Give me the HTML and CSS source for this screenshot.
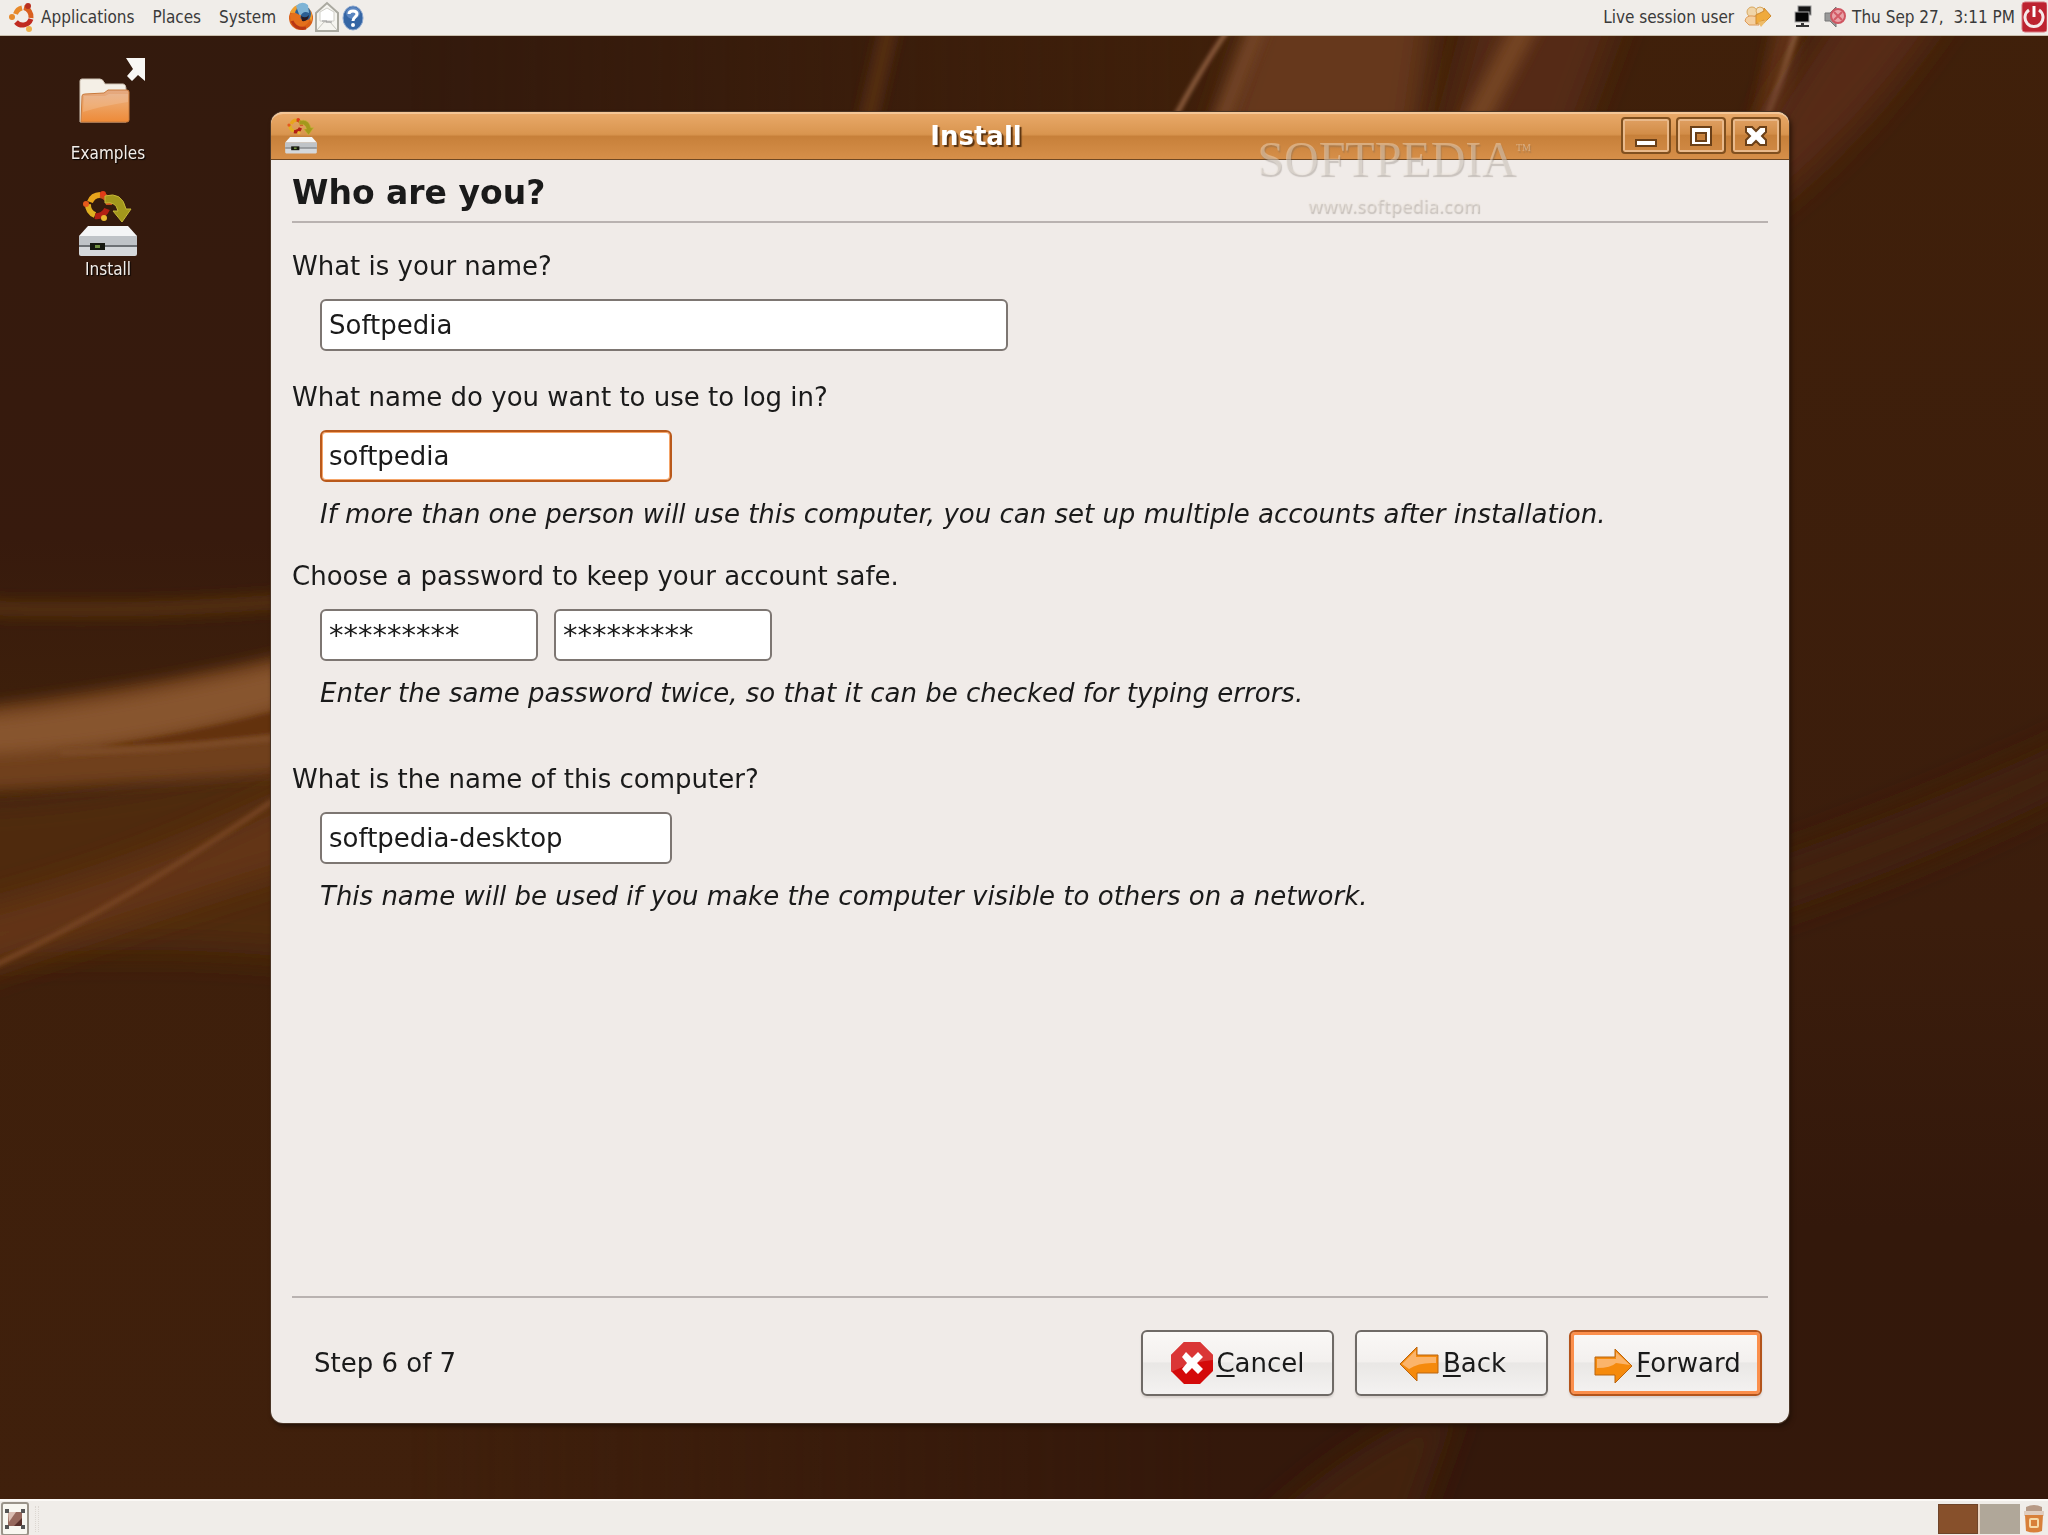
FILE: index.html
```html
<!DOCTYPE html>
<html lang="en">
<head>
  <meta charset="UTF-8">
  <meta name="viewport" content="width=device-width, initial-scale=1.0">
  <title>Install</title>
  <link rel="stylesheet" href="styles.css">
</head>
<body>
  <svg class="wallpaper" viewBox="0 0 2048 1535" preserveAspectRatio="none" aria-hidden="true">
    <defs>
      <filter id="soft" filterUnits="userSpaceOnUse" x="-100" y="-100" width="2248" height="1735"><feGaussianBlur stdDeviation="16"/></filter>
      <filter id="mid" filterUnits="userSpaceOnUse" x="-100" y="-100" width="2248" height="1735"><feGaussianBlur stdDeviation="7"/></filter>
      <filter id="fine" filterUnits="userSpaceOnUse" x="-100" y="-100" width="2248" height="1735"><feGaussianBlur stdDeviation="2"/></filter>
      <linearGradient id="base" x1="0" y1="0" x2="0" y2="1">
        <stop offset="0" stop-color="#331a0d"/>
        <stop offset="0.35" stop-color="#371a0d"/>
        <stop offset="0.45" stop-color="#3d1f0b"/>
        <stop offset="1" stop-color="#40200c"/>
      </linearGradient>
      <linearGradient id="right" x1="0" y1="0" x2="0" y2="1">
        <stop offset="0" stop-color="#40200a"/>
        <stop offset="0.6" stop-color="#3b1d0c"/>
        <stop offset="0.8" stop-color="#33180b"/>
        <stop offset="1" stop-color="#34180b"/>
      </linearGradient>
      <linearGradient id="fade" x1="0" y1="0" x2="1" y2="0">
        <stop offset="0.2" stop-color="#000"/>
        <stop offset="0.6" stop-color="#fff"/>
      </linearGradient>
      <mask id="fade-right"><rect width="2048" height="1535" fill="url(#fade)"/></mask>
    </defs>
    <rect width="2048" height="1535" fill="url(#base)"/>
    <rect width="2048" height="1535" fill="url(#right)" mask="url(#fade-right)"/>

    <!-- left waves -->
    <path d="M-60 800 Q100 800 320 740 L320 960 Q140 940 -60 960Z" fill="#502a0d" filter="url(#soft)"/>
    <path d="M-60 606 Q140 616 320 598" stroke="#56300f" stroke-width="14" fill="none" filter="url(#mid)"/>
    <path d="M-60 712 C60 696 170 682 320 646 L320 770 C200 780 80 786 -60 794Z" fill="#6f3f1c" filter="url(#mid)"/>
    <path d="M-60 722 C60 714 180 690 320 658 L320 696 C200 730 100 752 -60 756Z" fill="#87542f" filter="url(#mid)"/>
    <path d="M100 746 C180 736 250 718 320 700 L320 726 C240 740 170 744 100 746Z" fill="#64330f" filter="url(#fine)"/>
    <path d="M60 752 C160 752 220 742 320 734" stroke="#7d4b28" stroke-width="6" fill="none" filter="url(#fine)"/>
    <path d="M-60 920 C100 880 200 840 320 780 L320 860 C220 890 120 925 -60 985Z" fill="#643414" filter="url(#soft)"/>
    <path d="M-60 990 C70 935 190 860 320 768" stroke="#774522" stroke-width="5" fill="none" filter="url(#fine)"/>

    <!-- streaks above the window -->
    <path d="M905 -40 L862 145" stroke="#5c3013" stroke-width="14" filter="url(#mid)"/>
    <path d="M1270 -40 L1440 -40 L1410 180 L1200 180Z" fill="#66371a" filter="url(#soft)"/>
    <path d="M1285 -40 L1205 160" stroke="#7c4c2b" stroke-width="12" filter="url(#mid)"/>
    <path d="M1490 -40 L1640 -40 L1560 180 L1430 180Z" fill="#542b12" filter="url(#soft)"/>
    <path d="M1560 -40 L1455 160" stroke="#744524" stroke-width="24" filter="url(#mid)"/>
    <path d="M1238 16 Q1205 60 1168 130" stroke="#9a6747" stroke-width="4" fill="none" filter="url(#fine)"/>
    <path d="M1803 -40 L1764 140" stroke="#5e3112" stroke-width="28" filter="url(#mid)"/>
    <path d="M1800 16 Q1788 64 1762 130" stroke="#85563a" stroke-width="6" fill="none" filter="url(#fine)"/>
    <path d="M1870 -40 L1980 -40 Q1880 130 1740 230 L1770 110Z" fill="#572b12" filter="url(#soft)"/>

    <!-- right and bottom bands -->
    <path d="M1740 870 Q1920 810 2110 720 L2110 770 Q1940 860 1740 925Z" fill="#43220e" filter="url(#soft)"/>
    <path d="M1250 1540 Q1350 1440 1460 1400 L1410 1540Z" fill="#42220c" filter="url(#soft)"/>
  </svg>

  <header class="panel panel-top">
    <nav class="panel-menu">
      <button type="button" class="menu-item">
        <svg class="icon-logo" viewBox="0 0 28 32">
          <g fill="none" stroke-width="5">
            <path d="M7.500 13 A9 9.500 0 0 1 14 7" stroke="#e8892a"/>
            <path d="M16 6.500 A9 9.500 0 0 1 23 17" stroke="#d95f20"/>
            <path d="M23 18 A9 9.500 0 0 1 8 21" stroke="#c02a20"/>
          </g>
          <circle cx="4" cy="16" r="3" fill="#e58a2c"/>
          <circle cx="20" cy="5" r="3" fill="#b93020"/>
          <circle cx="21" cy="28" r="3" fill="#eeb04c"/>
        </svg>
        Applications
      </button>
      <button type="button" class="menu-item">Places</button>
      <button type="button" class="menu-item">System</button>
    </nav>
    <div class="launchers">
      <button type="button" class="launcher" aria-label="Firefox">
        <svg viewBox="0 0 26 32">
          <circle cx="13" cy="17" r="12" fill="#d96018"/>
          <path d="M2 12 C5 4 12 2 16 4 C23 7 26 15 23 21 C21 11 14 8 8 12Z" fill="#f0a030"/>
          <circle cx="15" cy="13" r="8" fill="#2b5f93"/>
          <path d="M8 5 Q14 -1 20 4 L21 12 Q15 9 12 16Z" fill="#7eb4d6"/>
          <path d="M2 14 C6 9 9 14 13 14 C11 18 15 21 22 18 C19 27 8 29 3 22Z" fill="#e4701c"/>
          <path d="M13 15 Q18 18 21 14 Q20 21 14 20Z" fill="#2a1a20"/>
          <path d="M4 20 Q8 29 18 27" fill="none" stroke="#b93713" stroke-width="3"/>
        </svg>
      </button>
      <button type="button" class="launcher" aria-label="Mail">
        <svg viewBox="0 0 26 32">
          <path d="M2 12 L13 2 L24 12 V30 H2Z" fill="#f6f5f0" stroke="#aaa9a0" stroke-width="2"/>
          <path d="M6 11 L13 7 L20 11 V20 H6Z" fill="#fff" stroke="#d0cfc8"/>
          <path d="M3 29 L10 21 H16 L23 29" fill="none" stroke="#c6c5be" stroke-width="1"/>
          <path d="M8 20 H13 M12 21 H18" stroke="#999" stroke-width="1"/>
        </svg>
      </button>
      <button type="button" class="launcher" aria-label="Help">
        <svg viewBox="0 0 26 32">
          <ellipse cx="13" cy="17" rx="10" ry="12" fill="#3465a4" stroke="#8ba7cf" stroke-width="1"/>
          <ellipse cx="13" cy="12" rx="7" ry="6" fill="#5b86c0"/>
          <path d="M9 13 C9 9 17 9 17 13 C17 16 13 16 13 20" fill="none" stroke="#fff" stroke-width="3"/>
          <circle cx="13" cy="24" r="2" fill="#fff"/>
        </svg>
      </button>
    </div>
    <div class="tray">
      <span>Live session user</span>
      <svg class="tray-users" viewBox="0 0 28 24" aria-hidden="true">
        <circle cx="8" cy="7" r="5" fill="#f0d5a8" stroke="#d8a860"/>
        <path d="M1 16 Q2 10 9 11 Q15 11 15 20 H5Z" fill="#f4cfa0" stroke="#dd9a58"/>
        <circle cx="16" cy="6" r="4" fill="#f3dfbd" stroke="#d8a860"/>
        <path d="M12 10 L20 6 V3 L27 11 L20 18 V15 L12 19Z" fill="#efaa3c" stroke="#cf8b30"/>
        <path d="M23 15 L17 22 L14 17" fill="#eebb66"/>
      </svg>
      <svg class="tray-network" viewBox="0 0 18 24" aria-hidden="true">
        <rect x="4" y="1" width="13" height="9" fill="#151515" stroke="#999"/>
        <rect x="1" y="7" width="14" height="10" fill="#050505" stroke="#aaa"/>
        <path d="M7 18 H10 V20 H15 V22 H2 V20 H7Z" fill="#333"/>
      </svg>
      <svg class="tray-volume" viewBox="0 0 22 24" aria-hidden="true">
        <path d="M1 8 H6 L12 2 V22 L6 16 H1Z" fill="#999" stroke="#777"/>
        <circle cx="14" cy="11" r="7" fill="#e9a3a8" stroke="#cf5561" stroke-width="2"/>
        <path d="M10 7 L18 15 M18 7 L10 15" stroke="#d35a66" stroke-width="2"/>
      </svg>
      <time>Thu Sep 27,&nbsp; 3:11 PM</time>
      <button type="button" class="power" aria-label="Log out">
        <svg viewBox="0 0 26 32">
          <rect x="1" y="1" width="25" height="30" rx="3" fill="#bd2330" stroke="#d77a80"/>
          <path d="M8 9 A9 9 0 1 0 18 9" fill="none" stroke="#f6eaea" stroke-width="3"/>
          <path d="M13 5 V16" stroke="#fff" stroke-width="3"/>
        </svg>
      </button>
    </div>
  </header>

  <main class="desktop">
    <div class="desktop-icons">
      <a href="#" class="desktop-icon">
        <svg class="icon-folder" viewBox="0 0 68 72">
          <defs>
            <linearGradient id="folder" x1="0" y1="0" x2="0" y2="1">
              <stop offset="0" stop-color="#e3a983"/>
              <stop offset="0.45" stop-color="#eda364"/>
              <stop offset="1" stop-color="#ee8a38"/>
            </linearGradient>
          </defs>
          <path d="M2 65 V24 Q2 22 4 22 H22 Q25 22 27 27 H45 Q48 27 48 33 V65Z" fill="#f4efe6" stroke="#cfc3b4"/>
          <path d="M3 65 L4 39 Q4 37 7 37 L26 36 L30 33 H49 Q51 33 51 35 V63 Q51 65 49 65Z" fill="url(#folder)" stroke="#c97a3c"/>
          <path d="M5 55 Q24 49 50 45 V37 H31 L27 39 H6Z" fill="#fff" opacity="0.15"/>
          <path d="M48 1 H67 V24 L60 18 L54 24 L49 19 L55 12Z" fill="#f8f7f4"/>
        </svg>
        Examples
      </a>
      <a href="#" class="desktop-icon icon-install">
        <svg class="icon-drive" viewBox="0 0 60 66">
          <g id="drive">
            <g fill="none" stroke-width="6">
              <path d="M12 11 A11 11 0 0 1 22 4" stroke="#e8a41c"/>
              <path d="M10 13 A11 11 0 0 0 17 24" stroke="#e0b020"/>
              <path d="M17 25 A11 11 0 0 0 29 18" stroke="#b21f14"/>
              <path d="M22 4 A10 10 0 0 1 31 14" stroke="#c8501a"/>
            </g>
            <circle cx="8" cy="13" r="3" fill="#e55a1c"/>
            <circle cx="25" cy="3" r="3" fill="#e03c18"/>
            <circle cx="26" cy="27" r="3" fill="#e8b830"/>
            <path d="M27 5 Q44 0 48 18 H53 L44 31 L35 20 H40 Q38 10 27 12Z" fill="#a3981c" stroke="#c6b838"/>
            <path d="M10 35 H50 L59 45 H1Z" fill="#f4f5f6"/>
            <rect x="1" y="45" width="58" height="20" rx="2" fill="#d5d8db"/>
            <rect x="1" y="45" width="58" height="9" fill="#bfc3c7"/>
            <path d="M1 55 H59" stroke="#6d7175" stroke-width="2"/>
            <rect x="12" y="52" width="15" height="7" fill="#15180f"/>
            <rect x="17" y="54" width="5" height="3" fill="#6f8f40"/>
          </g>
        </svg>
        Install
      </a>
    </div>

    <section class="window">
      <div class="titlebar">
        <svg class="title-icon" viewBox="0 0 60 66" aria-hidden="true"><use href="#drive"/></svg>
        <h2 class="title">Install</h2>
        <div class="title-buttons">
          <button type="button" class="title-button" aria-label="Minimize">
            <svg viewBox="0 0 24 24"><rect x="2" y="16" width="20" height="6" fill="#fff" stroke="#6b4018" stroke-width="2"/></svg>
          </button>
          <button type="button" class="title-button" aria-label="Maximize">
            <svg viewBox="0 0 24 24">
              <path d="M2 3 H22 V21 H2Z M7 9 V17 H17 V9Z" fill="#fff" fill-rule="evenodd" stroke="#6b4018" stroke-width="2"/>
            </svg>
          </button>
          <button type="button" class="title-button" aria-label="Close">
            <svg viewBox="0 0 24 24">
              <path d="M2 3 H8 L12 7 L16 3 H22 V8 L18 12 L22 16 V21 H16 L12 17 L8 21 H2 V16 L6 12 L2 8Z" fill="#fff" stroke="#6b4018" stroke-width="2"/>
            </svg>
          </button>
        </div>
      </div>

      <form class="installer">
        <h1>Who are you?</h1>

        <div class="fields">
          <div class="field">
            <label for="fullname">What is your name?</label>
            <input type="text" id="fullname" class="input-wide" value="Softpedia">
          </div>
          <div class="field">
            <label for="username">What name do you want to use to log in?</label>
            <input type="text" id="username" class="focused" value="softpedia">
            <p class="hint">If more than one person will use this computer, you can set up multiple accounts after installation.</p>
          </div>
          <div class="field">
            <label for="password">Choose a password to keep your account safe.</label>
            <div class="passwords">
              <input type="text" id="password" class="input-password" value="*********" autocomplete="off">
              <input type="text" class="input-password" value="*********" autocomplete="off" aria-label="Repeat the password">
            </div>
            <p class="hint">Enter the same password twice, so that it can be checked for typing errors.</p>
          </div>
          <div class="field field-computer">
            <label for="hostname">What is the name of this computer?</label>
            <input type="text" id="hostname" value="softpedia-desktop">
            <p class="hint">This name will be used if you make the computer visible to others on a network.</p>
          </div>
        </div>

        <div class="actions">
          <p class="step">Step 6 of 7</p>
          <button type="button" class="action">
            <svg viewBox="0 0 44 44" aria-hidden="true">
              <path d="M14 1 H30 L43 14 V30 L30 43 H14 L1 30 V14Z" fill="#d40a0a"/>
              <path d="M14 1 H30 L43 14 V19 Q24 20 1 31 V14Z" fill="#dd4848" opacity="0.7"/>
              <path d="M12 16 L16 11 L22 17 L28 11 L33 16 L27 22 L33 28 L28 33 L22 27 L16 33 L12 28 L17 22Z" fill="#fff"/>
            </svg>
            <span><u>C</u>ancel</span>
          </button>
          <button type="button" class="action">
            <svg viewBox="0 0 44 44" aria-hidden="true">
              <path d="M3 23 L20 6 V14 H41 V32 H20 V40Z" fill="#f58a0c" stroke="#b9640f" stroke-width="1"/>
              <path d="M5 23 L19 9 V16 H39 V22 Q22 21 12 28Z" fill="#fbb46a"/>
            </svg>
            <span><u>B</u>ack</span>
          </button>
          <button type="submit" class="action action-default">
            <svg viewBox="0 0 44 44" aria-hidden="true">
              <path d="M42 25 L25 8 V16 H5 V34 H25 V42Z" fill="#f58a0c" stroke="#b9640f" stroke-width="1"/>
              <path d="M40 24 L26 11 V18 H7 V27 Q21 27 26 22Z" fill="#fbb46a"/>
            </svg>
            <span><u>F</u>orward</span>
          </button>
        </div>
      </form>

      <div class="watermark" aria-hidden="true">
        <span class="watermark-name">SOFTPEDIA<sup>TM</sup></span>
        <span class="watermark-url">www.softpedia.com</span>
      </div>
    </section>
  </main>

  <footer class="panel panel-bottom">
    <button type="button" class="show-desktop" aria-label="Show desktop">
      <svg viewBox="0 0 20 20">
        <rect x="3" y="3" width="14" height="14" fill="#96685c"/>
        <path d="M3 3 H11 L4 13Z" fill="#d9bdb2"/>
        <path d="M9 17 L17 9 V17Z" fill="#59302a"/>
        <g fill="#555"><rect width="4" height="4"/><rect x="16" width="4" height="4"/><rect y="16" width="4" height="4"/><rect x="16" y="16" width="4" height="4"/></g>
      </svg>
    </button>
    <span class="grip"></span>
    <div class="workspaces">
      <button type="button" class="workspace workspace-active" aria-label="Workspace 1"></button>
      <button type="button" class="workspace" aria-label="Workspace 2"></button>
    </div>
    <button type="button" class="trash" aria-label="Trash">
      <svg viewBox="0 0 22 30">
        <path d="M3 3 Q11 -1 19 3 V8 H3Z" fill="#b79a86"/>
        <rect x="1" y="7" width="20" height="5" fill="#e0cdbf"/>
        <path d="M2 11 H20 L19 27 Q11 30 3 27Z" fill="#d8803a"/>
        <rect x="7" y="15" width="8" height="8" rx="1" fill="none" stroke="#f6d9a8" stroke-width="2"/>
      </svg>
    </button>
  </footer>
</body>
</html>
```
FILE: styles.css
```css
* {
  box-sizing: border-box;
}
body {
  display: flex;
  flex-direction: column;
  min-height: 100vh;
  margin: 0;
  background-color: #3a1c0c;
  color: #1a1a1a;
  font-family: "DejaVu Sans", sans-serif;
  font-size: 26px;
}
button {
  padding: 0;
  border: none;
  background: none;
  color: inherit;
  font: inherit;
}
svg {
  display: block;
}
h1, h2, p {
  margin: 0;
}
.wallpaper {
  position: fixed;
  inset: 0;
  width: 100%;
  height: 100%;
  z-index: -1;
}

/* panels */
.panel {
  display: flex;
  align-items: center;
  height: 36px;
  background-color: #f0ede9;
  color: #3a3a3a;
  font-family: "DejaVu Sans Condensed", "DejaVu Sans", sans-serif;
  font-size: 17px;
  white-space: nowrap;
}
.panel-top {
  padding: 0 1px 1px 8px;
  border-bottom: 1px solid #c9bfae;
}
.panel-menu {
  display: flex;
  gap: 18px;
}
.menu-item {
  display: flex;
  align-items: center;
  gap: 5px;
}
.icon-logo {
  width: 28px;
  height: 32px;
}
.launchers {
  display: flex;
  margin-left: 12px;
}
.launcher svg {
  width: 26px;
  height: 32px;
}
.tray {
  display: flex;
  align-items: center;
  margin-left: auto;
}
.tray svg {
  flex: none;
}
.tray-users {
  width: 28px;
  height: 24px;
  margin: 0 22px 0 10px;
}
.tray-network {
  width: 18px;
  height: 24px;
  margin-right: 12px;
}
.tray-volume {
  width: 22px;
  height: 24px;
  margin-right: 6px;
}
.power {
  margin-left: 6px;
}
.power svg {
  width: 26px;
  height: 32px;
}
.panel-bottom {
  padding: 2px 3px 0 1px;
  border-top: 2px solid #fbf9f6;
}
.show-desktop {
  padding: 5px 2px;
  border: 2px solid #999389;
  border-radius: 3px;
  background-color: #f8f7f1;
}
.show-desktop svg {
  width: 20px;
  height: 20px;
}
.grip {
  width: 4px;
  height: 26px;
  margin-left: 6px;
  border-left: 1px dotted #dcd7d1;
  border-right: 1px dotted #dcd7d1;
}
.workspaces {
  display: flex;
  gap: 2px;
  margin-left: auto;
  margin-right: 3px;
  background-color: #e9d4c2;
}
.workspace {
  width: 40px;
  height: 30px;
  background-color: #b0a799;
}
.workspace-active {
  background-color: #87502b;
  border: 1px solid #6f452a;
}
.trash svg {
  width: 22px;
  height: 30px;
}

/* desktop */
.desktop {
  display: flex;
  flex: 1;
  padding: 0 259px 76px 0;
}
.desktop-icons {
  display: flex;
  flex-direction: column;
  align-items: center;
  width: 271px;
  padding: 21px 55px 0 0;
}
.desktop-icon {
  display: flex;
  flex-direction: column;
  align-items: center;
  color: #f3eeea;
  font-family: "DejaVu Sans Condensed", "DejaVu Sans", sans-serif;
  font-size: 17px;
  line-height: 24px;
  text-decoration: none;
  text-shadow: 1px 1px 1px #000;
}
.icon-folder {
  width: 68px;
  height: 72px;
  margin: 0 0 12px 8px;
}
.icon-install {
  margin-top: 26px;
}
.icon-drive {
  width: 60px;
  height: 66px;
}

/* installer window */
.window {
  position: relative;
  display: flex;
  flex: 1;
  flex-direction: column;
  margin-top: 76px;
  border-radius: 12px;
  background-color: #f0ebe8;
  box-shadow: 0 0 0 1px #4a3526, 2px 3px 5px #211007;
}
.titlebar {
  display: flex;
  align-items: center;
  height: 48px;
  padding: 0 8px 2px 12px;
  border-top: 2px solid #f4c696;
  border-bottom: 1px solid #6f4823;
  border-radius: 12px 12px 0 0;
  background: linear-gradient(#e8a868, #d9954f 45%, #c7803a 50%, #d68f49);
}
.title-icon {
  width: 36px;
  height: 36px;
}
.title {
  flex: 1;
  padding-left: 12px;
  color: #fff;
  font-size: 26px;
  line-height: 32px;
  text-align: center;
  text-shadow: 2px 2px 1px #59320f;
}
.title-buttons {
  display: flex;
  gap: 5px;
}
.title-button {
  display: flex;
  align-items: center;
  justify-content: center;
  width: 50px;
  height: 37px;
  border: 2px solid #80501f;
  border-radius: 4px;
  background: linear-gradient(#e0a062, #d28d48 45%, #c7803a 50%, #d08944);
  box-shadow: inset 0 0 0 2px #e9b98a;
}
.title-button svg {
  width: 24px;
  height: 24px;
}
.installer {
  display: flex;
  flex: 1;
  flex-direction: column;
  padding: 13px 21px 27px 21px;
}
h1 {
  padding-bottom: 8px;
  border-bottom: 2px solid #b9b2b0;
  font-size: 33px;
  line-height: 40px;
}
.fields {
  display: flex;
  flex: 1;
  flex-direction: column;
  gap: 30px;
  padding-top: 27px;
}
.field {
  display: flex;
  flex-direction: column;
  align-items: flex-start;
  line-height: 32px;
}
.field-computer {
  margin-top: 24px;
}
.field input {
  width: 352px;
  height: 52px;
  margin: 17px 0 0 28px;
  padding: 0 7px;
  border: 2px solid #7d7672;
  border-radius: 6px;
  background-color: #fff;
  color: #1a1a1a;
  font: inherit;
}
.field .input-wide {
  width: 688px;
}
.field .focused {
  border-color: #b9591b;
  box-shadow: inset 0 0 0 1px #f5a569;
}
.passwords {
  display: flex;
  gap: 16px;
  margin-left: 28px;
}
.field .input-password {
  width: 218px;
  margin-left: 0;
  font-size: 29px;
}
.hint {
  margin: 16px 0 0 28px;
  font-style: italic;
}
.actions {
  display: flex;
  align-items: center;
  gap: 21px;
  padding: 32px 6px 0 22px;
  border-top: 2px solid #b9b2b0;
}
.step {
  flex: 1;
}
.action {
  display: flex;
  align-items: center;
  justify-content: center;
  gap: 2px;
  width: 193px;
  height: 66px;
  border: 2px solid #6f6a66;
  border-radius: 6px;
  background: linear-gradient(#faf8f6, #f3f0ee 48%, #e9e7e5 50%, #f4f2f1);
  box-shadow: 0 2px 2px #d8d2ce;
}
.action svg {
  width: 44px;
  height: 44px;
}
.action u {
  text-decoration-thickness: 2px;
  text-underline-offset: 3px;
}
.action-default {
  border-color: #b3541b;
  box-shadow: inset 0 0 0 3px #fb8f4c, 0 2px 2px #d8d2ce;
}

/* watermark laid over the window */
.watermark {
  position: absolute;
  top: 8px;
  right: 258px;
  display: flex;
  flex-direction: column;
  align-items: center;
  color: rgba(240, 232, 222, 0.4);
  text-shadow: 1px 2px 1px rgba(110, 100, 90, 0.3);
  pointer-events: none;
}
.watermark-name {
  font-family: "Liberation Serif", serif;
  font-size: 48px;
  line-height: 56px;
}
.watermark-name sup {
  font-size: 10px;
  vertical-align: 24px;
}
.watermark-url {
  font-family: "Open Sans", sans-serif;
  font-size: 18px;
  font-weight: 600;
  line-height: 36px;
}
```
